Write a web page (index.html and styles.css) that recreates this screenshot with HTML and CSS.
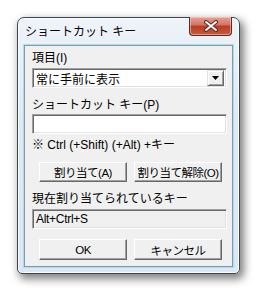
FILE: index.html
```html
<!DOCTYPE html>
<html lang="ja">

<head>
  <meta charset="UTF-8">
  <title>ショートカット キー</title>
  <link rel="stylesheet" href="styles.css">
</head>

<body>
  <div class="window">
    <div class="titlebar">
      <span class="title">ショートカット キー</span>
      <button class="close">
        <svg width="16" height="12" viewBox="0 0 16 12">
          <path d="M3 2 L13 10 M13 2 L3 10" stroke="#5a2a22" stroke-width="4" stroke-linecap="round" />
          <path d="M3 2 L13 10 M13 2 L3 10" stroke="#fff" stroke-width="2" stroke-linecap="round" />
        </svg>
      </button>
    </div>
    <div class="client">
      <div class="label first">項目(I)</div>
      <div class="select">
        <span class="value">常に手前に表示</span>
        <span class="drop">
          <svg width="7" height="4" viewBox="0 0 7 4"><path d="M0 0 H7 L3.5 4 Z" fill="#000" /></svg>
        </span>
      </div>
      <div class="label">ショートカット キー(P)</div>
      <div class="field input"></div>
      <div class="note">※ Ctrl (+Shift) (+Alt) +キー</div>
      <div class="buttons">
        <button class="btn">割り当て(A)</button>
        <button class="btn">割り当て解除(O)</button>
      </div>
      <div class="label">現在割り当てられているキー</div>
      <div class="field readonly">Alt+Ctrl+S</div>
      <div class="buttons bottom">
        <button class="btn">OK</button>
        <button class="btn">キャンセル</button>
      </div>
    </div>
  </div>
</body>

</html>
```

FILE: styles.css
```css
* {
  margin: 0;
  padding: 0;
  box-sizing: border-box;
  font-family: "Liberation Sans", "Noto Sans CJK JP", sans-serif;
}

body {
  width: 261px;
  height: 294px;
  background: #fff;
  font-size: 12px;
  color: #000;
  overflow: hidden;
}

.window {
  margin: 17px 0 0 17px;
  width: 223px;
  height: 257px;
  padding: 0 6px 6px;
  border: 1px solid #3c4650;
  border-radius: 7px 7px 5px 5px;
  background: linear-gradient(#eef3f9, #dfe9f4 40%, #dce7f3);
  box-shadow: inset 0 0 0 1px rgba(255, 255, 255, 0.8), 3px 4px 9px 1px rgba(0, 0, 0, 0.5);
}

.titlebar {
  height: 27px;
  display: flex;
  justify-content: space-between;
  align-items: flex-start;
}

.title {
  margin-top: 7px;
  margin-left: 1px;
  line-height: 14px;
  text-shadow: 0 0 6px #fff;
}

.close {
  width: 43px;
  height: 19px;
  margin-top: -1px;
  margin-right: 1px;
  display: flex;
  justify-content: center;
  align-items: center;
  border: 1px solid #5c2a24;
  border-top: none;
  border-radius: 0 0 4px 4px;
  background: linear-gradient(#e4a397, #d27262 45%, #b83c24 50%, #c85a3c);
  box-shadow: inset 0 0 0 1px rgba(255, 220, 210, 0.5);
}

.client {
  height: 222px;
  padding: 5px 5px 0 7px;
  border: 1px solid #8a96a3;
  background: #f0f0f0;
  box-shadow: 0 0 0 1px #a6def2;
}

.label {
  margin-top: 10px;
  line-height: 14px;
}

.label.first {
  margin-top: 0;
}

.select,
.field {
  height: 20px;
  border: 1px solid;
  border-color: #a0a0a0 #fff #fff #a0a0a0;
  box-shadow: inset 1px 1px #696969, inset -1px -1px #e3e3e3;
  background: #fff;
}

.select {
  margin-top: 3px;
  display: flex;
  justify-content: space-between;
  align-items: center;
  padding: 2px 2px 2px 3px;
}

.drop {
  width: 17px;
  height: 16px;
  display: flex;
  justify-content: center;
  align-items: center;
  background: #f0f0f0;
  border: 1px solid;
  border-color: #e3e3e3 #696969 #696969 #e3e3e3;
  box-shadow: inset 1px 1px #fff, inset -1px -1px #a0a0a0;
}

.field {
  margin-top: 2px;
}

.field.readonly {
  margin-top: 3px;
  padding: 0 3px;
  line-height: 18px;
  letter-spacing: -0.3px;
  background: #f0f0f0;
}

.note {
  margin-top: 4px;
  line-height: 14px;
}

.buttons {
  margin-top: 10px;
  display: flex;
  gap: 7px;
  padding-left: 7px;
}

.btn {
  width: 88px;
  height: 20px;
  padding: 0;
  white-space: nowrap;
  font-size: 11.5px;
  letter-spacing: -0.5px;
  background: #f0f0f0;
  border: 1px solid;
  border-color: #fff #696969 #696969 #fff;
  box-shadow: inset -1px -1px #a0a0a0;
  color: #000;
}

.buttons.bottom .btn {
  height: 21px;
}
```
